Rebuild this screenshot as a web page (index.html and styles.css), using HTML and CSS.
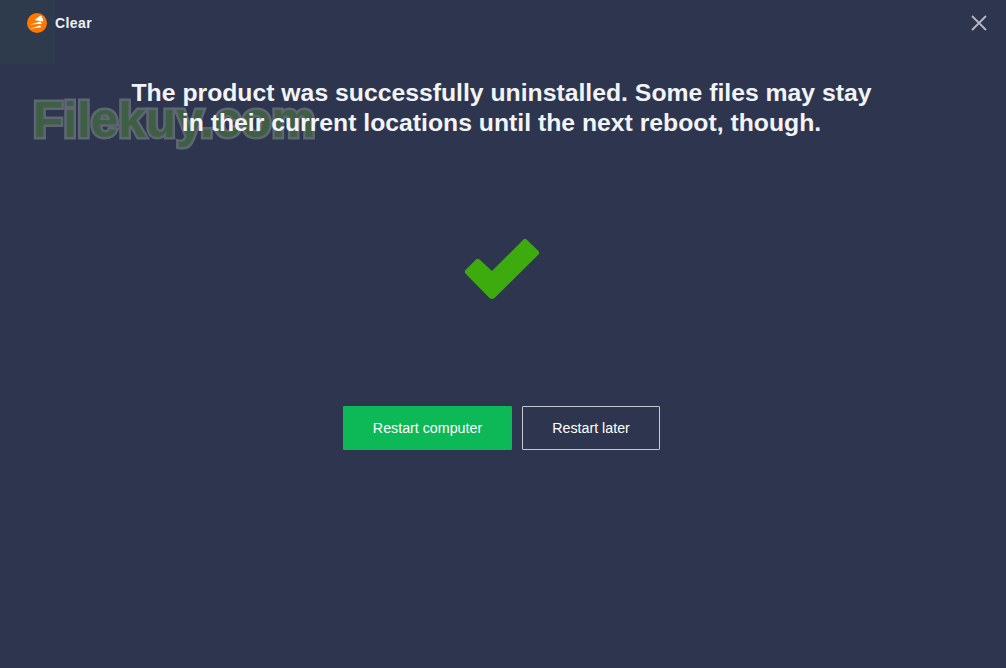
FILE: index.html
```html
<!DOCTYPE html>
<html lang="en">
<head>
    <meta charset="UTF-8">
    <meta name="viewport" content="width=device-width, initial-scale=1.0">
    <title>Clear</title>
    <link rel="stylesheet" href="styles.css">
</head>
<body>
    <div class="corner-tint"></div>
    <div class="watermark">Filekuy.com</div>
    <header class="title-bar">
        <div class="brand">
            <svg class="brand-icon" viewBox="0 0 20 20" width="20" height="20" aria-hidden="true">
                <circle cx="10" cy="10" r="10" fill="#ff7800"/>
                <path d="M7.5 7 L13 2.8 Q14 2.4 14.6 3.2 L16.2 7 Q16.4 8.2 15.2 8.4 Z" fill="#fff"/>
                <path d="M3.2 11.6 L13.2 8.6 L15 10.8 Z" fill="#fff"/>
                <path d="M2.6 15.8 L13.2 12.6 L14.2 14.2 Z" fill="#fff"/>
            </svg>
            <span class="brand-name">Clear</span>
        </div>
        <button class="close-btn" aria-label="Close">
            <svg viewBox="0 0 16 16" width="16" height="16" aria-hidden="true">
                <path d="M1 1 L15 15 M15 1 L1 15" stroke="#b4b8c4" stroke-width="1.8" fill="none"/>
            </svg>
        </button>
    </header>
    <main class="content">
        <h1 class="message">The product was successfully uninstalled. Some files may stay<br>in their current locations until the next reboot, though.</h1>
        <svg class="check" viewBox="0 0 76 62" width="76" height="62" aria-hidden="true">
            <path d="M59.5 1.5 Q61 0 62.5 1.5 L74.5 13 Q76 15 74.5 16.5 L30.5 60 Q28 62 25.5 60 L1.5 35.5 Q0 33.5 1.5 32 L12 21.5 Q13.5 20 15.5 21.5 L28 33 Z" fill="#3dab0e"/>
        </svg>
        <div class="actions">
            <button class="btn btn-primary">Restart computer</button>
            <button class="btn btn-outline">Restart later</button>
        </div>
    </main>
</body>
</html>
```

FILE: styles.css
```css
* {
    box-sizing: border-box;
}

body {
    font-family: "Liberation Sans", Arial, sans-serif;
    margin: 0;
    width: 1006px;
    height: 668px;
    overflow: hidden;
    position: relative;
    background-color: #2e364f;
    color: #fff;
}

.corner-tint {
    position: absolute;
    left: 0;
    top: 0;
    width: 55px;
    height: 64px;
    background-color: #2e3b4d;
}

.watermark {
    position: absolute;
    left: 33px;
    top: 90px;
    font-size: 49.5px;
    line-height: 60px;
    font-weight: bold;
    color: #3f5f45;
    -webkit-text-stroke: 5px #5f6673;
    paint-order: stroke fill;
    pointer-events: none;
}

.title-bar {
    position: relative;
    display: flex;
    justify-content: space-between;
    align-items: center;
    height: 46px;
    padding: 0 19px 0 27px;
}

.brand {
    display: flex;
    align-items: center;
    gap: 8px;
}

.brand-icon {
    display: block;
}

.brand-name {
    font-size: 14px;
    font-weight: bold;
    letter-spacing: 0.4px;
    color: #eef1f6;
}

.close-btn {
    display: flex;
    padding: 0;
    border: none;
    background: none;
    cursor: pointer;
}

.content {
    position: relative;
    display: flex;
    flex-direction: column;
    align-items: center;
    padding-right: 3px;
}

.message {
    margin: 32px 0 0;
    font-size: 24.75px;
    line-height: 30px;
    font-weight: bold;
    text-align: center;
    color: #f2f4f8;
}

.check {
    margin-top: 100px;
    display: block;
}

.actions {
    display: flex;
    gap: 10px;
    margin-top: 106px;
}

.btn {
    height: 44px;
    font-family: inherit;
    font-size: 14.25px;
    color: #fff;
    border-radius: 1px;
    cursor: pointer;
}

.btn-primary {
    width: 169px;
    border: none;
    background-color: #0db857;
}

.btn-outline {
    width: 138px;
    border: 1px solid #c8cbd3;
    background: none;
}
```
